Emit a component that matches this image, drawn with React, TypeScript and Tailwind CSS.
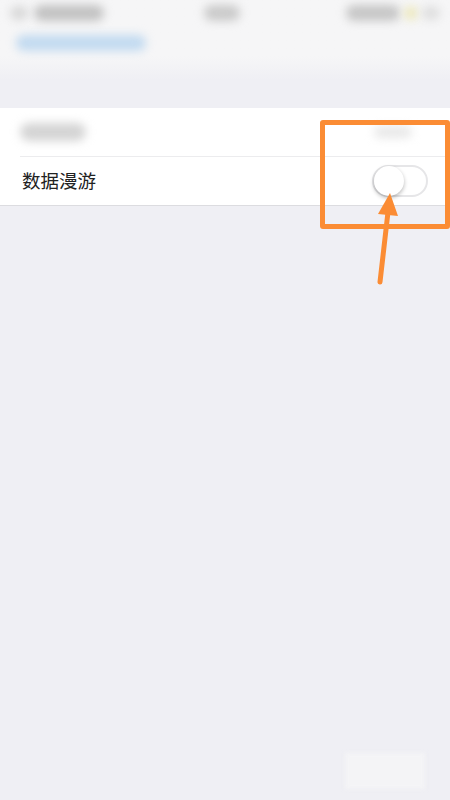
import React from 'react'

function Blur({ className }: { className: string }) {
  return <div className={`rounded-full blur-[5px] ${className}`} />
}

function Toggle() {
  return (
    <div className="relative h-[32px] w-[56px] rounded-full border-2 border-[#e6e6e8] bg-white">
      <div className="absolute left-0 top-[-1px] h-[30px] w-[30px] rounded-full bg-white shadow-[0_2px_4px_rgba(0,0,0,0.28)]" />
    </div>
  )
}

export default function App() {
  return (
    <div
      className="relative h-[800px] w-[450px] overflow-hidden bg-[#efeff4]"
      style={{ fontFamily: '"Noto Sans CJK SC", "Noto Sans", sans-serif' }}
    >
      {/* 顶部导航（模糊） */}
      <div className="h-[80px] bg-gradient-to-b from-[#f6f6f7] from-70% to-[#efeff4] px-[10px] pt-[5px]">
        <div className="flex items-center justify-between">
          <div className="flex items-center gap-[6px]">
            <Blur className="h-[14px] w-[18px] bg-[#d8d8d8]" />
            <Blur className="h-[16px] w-[70px] bg-[#c2c2c2]" />
          </div>
          <Blur className="mr-[6px] h-[16px] w-[36px] bg-[#cacaca]" />
          <div className="flex items-center gap-[4px]">
            <Blur className="h-[16px] w-[54px] bg-[#c6c6c6]" />
            <Blur className="h-[14px] w-[14px] bg-[#ece8bc]" />
            <Blur className="h-[14px] w-[18px] bg-[#dedede]" />
          </div>
        </div>
        <Blur className="ml-[6px] mt-[14px] h-[16px] w-[130px] bg-[#c2daf0]" />
      </div>

      <div className="h-[28px]" />

      {/* 设置列表 */}
      <div className="border-b border-[#dcdce0] bg-white">
        <div className="ml-[20px] flex h-[49px] items-center justify-between border-b border-[#ececee] pr-[38px]">
          <Blur className="h-[18px] w-[66px] bg-[#d4d4d4]" />
          <Blur className="h-[12px] w-[38px] bg-[#e8e8e8]" />
        </div>
        <div className="flex h-[48px] items-center justify-between pl-[22px] pr-[22px]">
          <span className="text-[18.5px] text-[#222]">数据漫游</span>
          <Toggle />
        </div>
      </div>

      {/* 标注框 */}
      <div className="absolute left-[320px] top-[120px] h-[109px] w-[130px] rounded-[3px] border-[5px] border-[#fb8c34]" />

      {/* 箭头 */}
      <svg className="absolute left-0 top-0" width="450" height="800">
        <line x1="380" y1="282" x2="388" y2="212" stroke="#fb8c34" strokeWidth="5" strokeLinecap="round" />
        <polygon points="390,193 378,214 398,216" fill="#fb8c34" />
      </svg>

      {/* 水印 */}
      <div className="absolute left-[345px] top-[753px] h-[36px] w-[80px] bg-[#f4f4f6] blur-[2px]" />
    </div>
  )
}
